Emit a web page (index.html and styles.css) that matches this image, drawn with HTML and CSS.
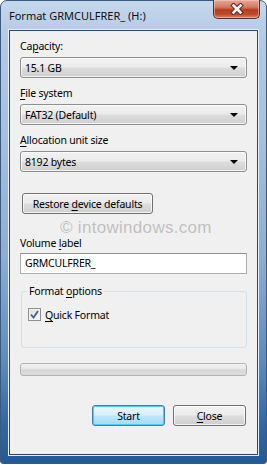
FILE: index.html
```html
<!DOCTYPE html>
<html>
<head>
<meta charset="utf-8">
<link rel="stylesheet" href="styles.css">
</head>
<body>
<div class="window">
  <div class="titlebar">
    <span class="title">Format GRMCULFRER_ (H:)</span>
    <div class="close-x">
      <svg width="18" height="12" viewBox="0 0 18 12">
        <path d="M5.5 2.5 L12.5 9.5 M12.5 2.5 L5.5 9.5" stroke="#6b2a20" stroke-width="4.6" stroke-linecap="square"/>
        <path d="M5.5 2.5 L12.5 9.5 M12.5 2.5 L5.5 9.5" stroke="#ffffff" stroke-width="2.6" stroke-linecap="square"/>
      </svg>
    </div>
  </div>
  <div class="client">
    <div class="label first">Ca<u>p</u>acity:</div>
    <div class="combo"><span class="val">15.1 GB</span><i class="arrow"></i></div>
    <div class="label"><u>F</u>ile system</div>
    <div class="combo"><span class="val">FAT32 (Default)</span><i class="arrow"></i></div>
    <div class="label"><u>A</u>llocation unit size</div>
    <div class="combo"><span class="val">8192 bytes</span><i class="arrow"></i></div>
    <div class="btn restore"><span>Restore <u>d</u>evice defaults</span></div>
    <div class="label vol">Volume <u>l</u>abel</div>
    <div class="input">GRMCULFRER_</div>
    <div class="group">
      <div class="legend">Format <u>o</u>ptions</div>
      <div class="check-row">
        <span class="checkbox">
          <svg width="9" height="9" viewBox="0 0 9 9"><path d="M1 4.5 L3.5 7.5 L8 1" fill="none" stroke="#3a5ea8" stroke-width="1.8"/></svg>
        </span>
        <span><u>Q</u>uick Format</span>
      </div>
    </div>
    <div class="progress"></div>
    <div class="buttons">
      <div class="btn default"><span>Start</span></div>
      <div class="btn"><span><u>C</u>lose</span></div>
    </div>
    <div class="watermark">© intowindows.com</div>
  </div>
</div>
</body>
</html>
```
FILE: styles.css
```css
body{margin:0;background:#ffffff;font-family:"Noto Sans","Open Sans",sans-serif;font-size:10.5px;letter-spacing:-0.2px;color:#000}
u{text-decoration:underline;text-underline-offset:2px;text-decoration-thickness:1px}
.window{width:267px;height:464px;box-sizing:border-box;border:1px solid #3a5a7e;border-radius:7px 7px 3px 3px;background:linear-gradient(to bottom,#c4d8ed 0%,#b3cae3 8%,#a6bfdb 30%,#8eaed2 55%,#5d8bc0 78%,#2f66a6 92%,#245a99 100%);display:flex;flex-direction:column;padding:0 7px 8px 7px}
.titlebar{height:29px;display:flex;align-items:flex-start;position:relative}
.title{padding:7px 0 0 1px;font-size:11px;letter-spacing:0;color:#111}
.close-x{margin-left:auto;margin-right:-1px;margin-top:-1px;width:47px;height:19px;box-sizing:border-box;border:1px solid #5a2e2a;border-top:none;border-radius:0 0 5px 5px;background:linear-gradient(to bottom,#e6a895 0%,#d47a62 40%,#b53a1e 55%,#c24a2a 80%,#d98468 100%);display:flex;align-items:center;justify-content:center;box-shadow:inset 0 0 0 1px rgba(255,220,210,.45)}
.client{flex:1;background:#f0f0f0;border:1px solid #29466b;box-shadow:0 0 0 1px #e8f0f8;margin:0 1px 0 1px;padding:8px 10px 0 10px;display:flex;flex-direction:column;position:relative}
.label{height:15px;line-height:15px;margin:8px 0 3px 0;white-space:nowrap}
.label.first{margin-top:0}
.label.vol{margin-top:22px;margin-bottom:2px}
.combo{height:21px;box-sizing:border-box;border:1px solid #8e8f8f;border-radius:3px;background:linear-gradient(to bottom,#f2f2f2 0%,#ebebeb 48%,#dddddd 52%,#cfcfcf 100%);display:flex;align-items:center;padding:0 8px 0 4px;box-shadow:inset 0 0 0 1px rgba(255,255,255,.7)}
.val{flex:1}
.arrow{width:0;height:0;border-left:4px solid transparent;border-right:4px solid transparent;border-top:4px solid #000}
.btn{height:21px;box-sizing:border-box;border:1px solid #707070;border-radius:3px;background:linear-gradient(to bottom,#f2f2f2 0%,#ebebeb 48%,#dddddd 52%,#cfcfcf 100%);display:flex;align-items:center;justify-content:center;box-shadow:inset 0 0 0 1px rgba(255,255,255,.75);white-space:nowrap}
.restore{width:131px;margin:21px 0 0 2px}
.input{height:21px;box-sizing:border-box;border:1px solid #abadb3;border-top-color:#8e9196;background:#fff;padding:0 0 0 4px;line-height:19px}
.group{margin:17px 0 0 1px;height:57px;box-sizing:border-box;border:1px solid #d5dfe5;border-radius:3px;position:relative;padding:15px 0 0 6px}
.legend{position:absolute;top:-8px;left:5px;background:#f0f0f0;padding:0 2px;line-height:15px}
.check-row{display:flex;align-items:center;gap:4px;height:15px}
.checkbox{width:13px;height:13px;box-sizing:border-box;border:1px solid #8e8f8f;background:linear-gradient(135deg,#dcdcdc,#fbfbfb);display:flex;align-items:center;justify-content:center;box-shadow:inset 0 0 0 1px #f4f4f4}
.progress{margin-top:15px;height:13px;box-sizing:border-box;border:1px solid #b2b2b2;border-radius:3px;background:linear-gradient(to bottom,#f3f3f3 0%,#e6e6e6 45%,#d6d6d6 55%,#dedede 100%)}
.buttons{display:flex;justify-content:flex-end;gap:8px;margin:29px 1px 0 0}
.buttons .btn{width:73px}
.btn.default{border-color:#3c7fb1;background:linear-gradient(to bottom,#eaf6fd 0%,#d9f0fc 48%,#bee6fd 52%,#a7d9f5 100%);box-shadow:inset 0 0 0 1px #48cef4}
.watermark{position:absolute;left:50px;top:190px;line-height:14px;font-family:"Liberation Sans",Arial,sans-serif;font-size:17px;color:rgba(150,150,150,.55);pointer-events:none;letter-spacing:0.3px}
```
